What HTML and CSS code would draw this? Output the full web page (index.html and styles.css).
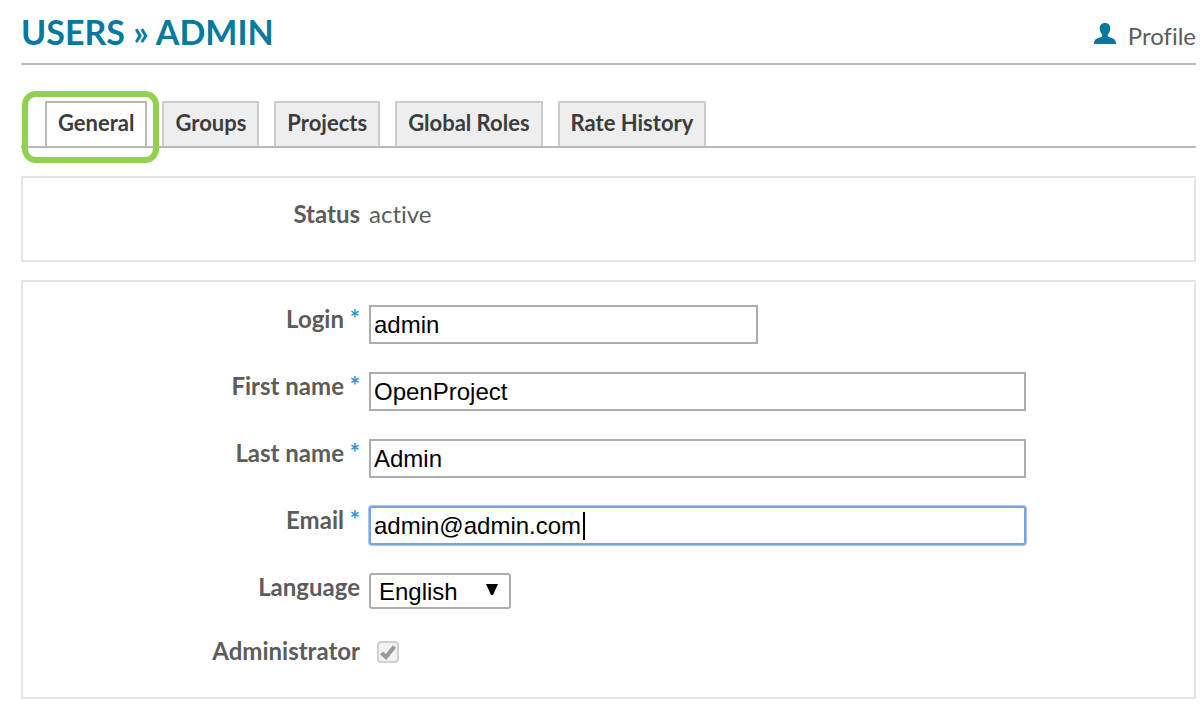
FILE: index.html
```html
<!DOCTYPE html>
<html lang="en">
<head>
<meta charset="utf-8">
<meta name="viewport" content="width=device-width, initial-scale=1">
<title>Users » Admin</title>
<link rel="stylesheet" href="styles.css">
</head>
<body>
<main class="page">
  <header class="page-header">
    <h1 class="title">USERS » ADMIN</h1>
    <a class="profile-link" href="#profile">
      <svg class="profile-icon" viewBox="0 0 22 22" aria-hidden="true"><path d="M11 0C7.500 0 5.500 2.400 5.700 5.500C5.800 8.200 6.900 10.300 8.200 11.500V13.500L3 15.500C.8 16.500 0 18 0 21H22C22 18 21.200 16.500 19 15.500L13.800 13.500V11.500C15.100 10.300 16.200 8.200 16.300 5.500C16.500 2.400 14.500 0 11 0Z"/></svg>
      <span>Profile</span>
    </a>
  </header>

  <nav class="tabs" aria-label="User settings">
    <a class="tab tab-active" href="#general" aria-current="page">General</a>
    <a class="tab" href="#groups">Groups</a>
    <a class="tab" href="#projects">Projects</a>
    <a class="tab" href="#roles">Global Roles</a>
    <a class="tab" href="#rates">Rate History</a>
  </nav>

  <section class="panel panel-status">
    <div class="row">
      <span class="label">Status</span>
      <span class="status">active</span>
    </div>
  </section>

  <form class="panel panel-form">
    <div class="row">
      <label class="label" for="login">Login <span class="required">*</span></label>
      <div class="field field-short"><input class="input" id="login" type="text" value="admin"></div>
    </div>
    <div class="row">
      <label class="label" for="first">First name <span class="required">*</span></label>
      <div class="field"><input class="input" id="first" type="text" value="OpenProject"></div>
    </div>
    <div class="row">
      <label class="label" for="last">Last name <span class="required">*</span></label>
      <div class="field"><input class="input" id="last" type="text" value="Admin"></div>
    </div>
    <div class="row">
      <label class="label" for="email">Email <span class="required">*</span></label>
      <div class="field field-focus"><input class="input" id="email" type="email" value="admin@admin.com"></div>
    </div>
    <div class="row">
      <label class="label" for="language">Language</label>
      <div class="select-wrap">
        <select class="select" id="language"><option>English</option></select>
        <svg class="arrow" viewBox="0 0 12 12" aria-hidden="true"><path d="M0 0H12L7 11H5Z"/></svg>
      </div>
    </div>
    <div class="row">
      <label class="label" for="admin">Administrator</label>
      <div class="check-wrap">
        <input class="check" id="admin" type="checkbox" checked disabled>
        <svg class="tick" viewBox="0 0 16 16" aria-hidden="true"><path d="M1.500 9L6 13L14.500 2.500"/></svg>
      </div>
    </div>
  </form>
</main>
</body>
</html>
```

FILE: styles.css
```css
* {
  box-sizing: border-box;
}

body {
  margin: 0;
  background: #fff;
  color: #5c5c5c;
  font-family: Lato, "Liberation Sans", sans-serif;
  font-size: 24px;
  line-height: 32px;
  font-variant-ligatures: none;
}

.page {
  padding: 0 8px 8px 21px;
}

.page-header {
  display: flex;
  justify-content: space-between;
  align-items: center;
  height: 65px;
  border-bottom: 2px solid #b8b8b8;
}

.title {
  margin: 0;
  color: #06799f;
  font-size: 34px;
  line-height: 40px;
  font-weight: 700;
}

.profile-link {
  display: flex;
  align-items: center;
  gap: 12px;
  padding-top: 8px;
  color: #5c5c5c;
  text-decoration: none;
}

.profile-icon {
  width: 22px;
  height: 22px;
  margin-bottom: 4px;
  fill: #06799f;
}

.tabs {
  display: flex;
  gap: 15px;
  margin-top: 36px;
  padding-left: 24px;
  border-bottom: 2px solid #b8b8b8;
}

.tab {
  position: relative;
  padding: 4px 11px 7px;
  border: 2px solid #ccc;
  border-bottom: 0;
  background: #eee;
  color: #3c3c3c;
  font-size: 22px;
  font-weight: 700;
  text-decoration: none;
}

.tab-active {
  border-color: #b8b8b8;
  background: #fff;
}

.tab-active::after {
  content: "";
  position: absolute;
  inset: -12px -14px -17px -25px;
  border: 6px solid #92d050;
  border-radius: 14px;
}

.panel {
  border: 2px solid #e5e5e5;
}

.panel-status {
  margin-top: 28px;
  padding: 20px 0 30px;
}

.panel-status .label {
  line-height: 32px;
}

.panel-form {
  display: flex;
  flex-direction: column;
  gap: 28px;
  margin-top: 18px;
  padding: 23px 0 30px;
}

.row {
  display: grid;
  grid-template-columns: 337px 1fr;
  column-gap: 9px;
  align-items: start;
  padding-right: 4px;
}

.label {
  text-align: right;
  font-weight: 700;
  line-height: 28px;
}

.required {
  color: #3493d6;
}

.field {
  position: relative;
  width: 80%;
}

.field-short {
  max-width: 389px;
}

.input,
.select {
  display: block;
  width: 100%;
  margin: 0;
  border: 2px solid #adadad;
  background: #fff;
  color: #000;
  font-family: "Liberation Sans", Arial, sans-serif;
  font-size: 24px;
}

.input {
  height: 39px;
  padding: 0 3px;
  outline: none;
}

.field-focus .input {
  border-color: #7ba3e4;
  border-radius: 3px;
  box-shadow: 0 0 0 1px #a9c7f7;
}

.field-focus::after {
  content: "";
  position: absolute;
  top: 6px;
  left: 214px;
  width: 2px;
  height: 28px;
  background: #000;
}

.select-wrap {
  position: relative;
  width: 142px;
}

.select {
  height: 36px;
  padding: 0 8px;
  border-radius: 3px;
  appearance: none;
}

.arrow {
  position: absolute;
  top: 11px;
  right: 13px;
  width: 12px;
  height: 12px;
  pointer-events: none;
}

.check-wrap {
  position: relative;
  width: 22px;
  margin: 4px 8px;
}

.check {
  display: block;
  width: 22px;
  height: 22px;
  margin: 0;
  border: 2px solid #d0d0d0;
  border-radius: 4px;
  background: #f2f2f2;
  appearance: none;
}

.tick {
  position: absolute;
  top: 3px;
  left: 3px;
  width: 16px;
  height: 16px;
  fill: none;
  stroke: #999;
  stroke-width: 4;
}
```
